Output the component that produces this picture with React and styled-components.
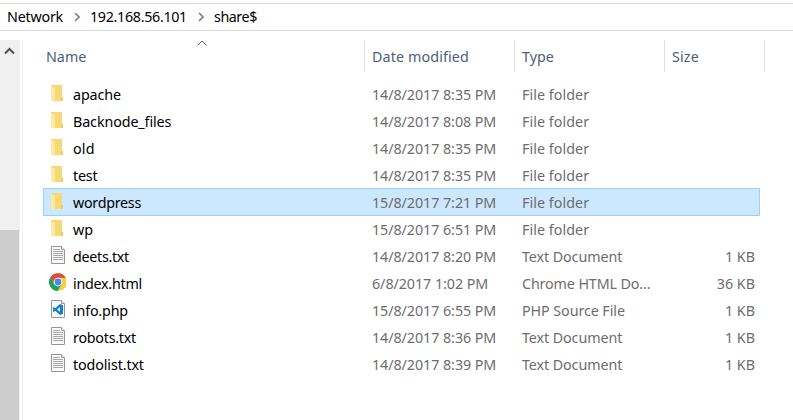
import React from "react";
import styled, { createGlobalStyle } from "styled-components";

const GlobalStyle = createGlobalStyle`
  * { box-sizing: border-box; }
  body { margin: 0; background: #fff; overflow: hidden; }
`;

const Window = styled.div`
  display: flex;
  flex-direction: column;
  width: 793px;
  height: 420px;
  padding-top: 3px;
  background: #fff;
  color: #000;
  font: 14.3px/27px "Noto Sans", "Open Sans", sans-serif;
  white-space: nowrap;
  overflow: hidden;
`;

const AddressBar = styled.nav`
  display: flex;
  align-items: flex-start;
  height: 28px;
  flex: none;
  border-top: 1px solid #d9d9d9;
  border-bottom: 1px solid #d9d9d9;
  padding-left: 7px;
  line-height: 25px;
`;

const Crumb = styled.span`
  width: ${(p) => p.$width}px;
  letter-spacing: ${(p) => p.$spacing}px;
`;

const CrumbArrow = styled.svg`
  width: 6px;
  height: 10px;
  margin: 8px 10px 0 10px;
  flex: none;
`;

const Body = styled.div`
  display: flex;
  flex: 1;
  min-height: 0;
  margin-top: 9px;
`;

const ScrollBar = styled.div`
  display: flex;
  flex-direction: column;
  width: 20px;
  background: #f0f0f0;
`;

const ScrollUp = styled.div`
  height: 190px;
  padding: 7px 0 0 4px;
  line-height: 0;
`;

const Thumb = styled.div`
  flex: 1;
  width: 19px;
  background: #cdcdcd;
`;

const Pane = styled.main`
  flex: 1;
  margin-left: 2px;
  border-left: 1px solid #f4f4f4;
`;

const Header = styled.div`
  display: grid;
  grid-template-columns: 341px 150px 150px 100px;
  height: 32px;
  margin-bottom: 9px;
  margin-left: 1px;
  color: #4c607a;
`;

const HeaderCell = styled.div`
  position: relative;
  border-right: 1px solid #e2e2e2;
  padding: 3px 0 0 ${(p) => p.$indent}px;
  letter-spacing: ${(p) => p.$spacing || 0}px;
`;

const SortArrow = styled.svg`
  position: absolute;
  left: 173px;
  top: 0;
  width: 10px;
  height: 6px;
`;

const Row = styled.div`
  display: grid;
  grid-template-columns: 29px 299px 150px 150px 83px;
  align-items: start;
  width: 717px;
  height: ${(p) => (p.$selected ? 28 : 27)}px;
  margin: ${(p) => (p.$selected ? -1 : 0)}px 0 0 20px;
  border: solid ${(p) => (p.$selected ? "#99d1ff" : "transparent")};
  border-width: ${(p) => (p.$selected ? 1 : 0)}px 1px;
  background: ${(p) => (p.$selected ? "#cce8ff" : "transparent")};
`;

const IconBox = styled.div`
  height: 22px;
  padding: 2px 0 0 2px;
  line-height: 0;
  svg { width: 20px; height: 20px; }
`;

const Name = styled.span`
  letter-spacing: ${(p) => p.$spacing}px;
`;

const Detail = styled.span`
  color: #6d6d6d;
  letter-spacing: ${(p) => p.$spacing || 0}px;
`;

const Size = styled(Detail)`
  text-align: right;
`;

function FolderIcon() {
  return (
    <svg viewBox="0 0 20 20">
      <path d="M6 2h10v12h1v4H7z" fill="#f8d775" />
      <path d="M15 14h2v4h-2z" fill="#f0cb66" />
      <path d="M5 2h3v15.5L5 17z" fill="#f5d480" />
      <path d="M5 2.5l4 2.3V19l-4-1.5z" fill="#ffe8a0" />
    </svg>
  );
}

function Sheet({ children }) {
  return (
    <svg viewBox="0 0 20 20">
      <path d="M5.5 1.5h10l3 3v14h-13z" fill="#fafafa" stroke="#969696" />
      <path d="M15.5 1.5v3h3" fill="#fff" stroke="#969696" />
      {children}
    </svg>
  );
}

function TextIcon() {
  return (
    <Sheet>
      <path d="M7 4.5h7M7 6.5h10M7 8.5h10M7 10.5h10M7 12.5h10M7 14.5h10" stroke="#a8a8a8" />
    </Sheet>
  );
}

function CodeIcon() {
  return (
    <Sheet>
      <path d="M14 5l3 1.3v8.4L14 16l-4.7-4.2L7.6 13 7 12.5V8.4l.6-.4 1.7 1.2zM14 8.2l-2.8 2.3L14 12.8z" fill="#1480cb" fillRule="evenodd" />
    </Sheet>
  );
}

function ChromeIcon() {
  return (
    <svg viewBox="0 0 20 20">
      <circle cx="12" cy="10" r="9" fill="#fbce32" />
      <path d="M4.2 5.5A9 9 0 0 0 11.6 19l4.1-7-3.7 1.9-3.9-1.9z" fill="#1da462" />
      <path d="M4.2 5.5A9 9 0 0 1 19.8 5.8H12a4.2 4.2 0 0 0-4 5.4z" fill="#dc4b3e" />
      <circle cx="12" cy="10" r="4.3" fill="#fff" />
      <circle cx="12" cy="10" r="3.4" fill="#4688f1" />
    </svg>
  );
}

const icons = { folder: FolderIcon, text: TextIcon, chrome: ChromeIcon, code: CodeIcon };

const typeSpacing = {
  "File folder": 0.05,
  "Text Document": -0.09,
  "Chrome HTML Do...": -0.13,
  "PHP Source File": -0.08,
};

const files = [
  { name: "apache", spacing: -0.1, icon: "folder", date: "14/8/2017 8:35 PM", type: "File folder" },
  { name: "Backnode_files", spacing: -0.1, icon: "folder", date: "14/8/2017 8:08 PM", type: "File folder" },
  { name: "old", spacing: 0.15, icon: "folder", date: "14/8/2017 8:35 PM", type: "File folder" },
  { name: "test", spacing: -0.2, icon: "folder", date: "14/8/2017 8:35 PM", type: "File folder" },
  { name: "wordpress", spacing: -0.28, icon: "folder", date: "15/8/2017 7:21 PM", type: "File folder", selected: true },
  { name: "wp", spacing: -0.1, icon: "folder", date: "15/8/2017 6:51 PM", type: "File folder" },
  { name: "deets.txt", spacing: -0.3, icon: "text", date: "14/8/2017 8:20 PM", type: "Text Document", size: "1 KB" },
  { name: "index.html", spacing: -0.26, icon: "chrome", date: "6/8/2017 1:02 PM", type: "Chrome HTML Do...", size: "36 KB" },
  { name: "info.php", spacing: -0.18, icon: "code", date: "15/8/2017 6:55 PM", type: "PHP Source File", size: "1 KB" },
  { name: "robots.txt", spacing: -0.24, icon: "text", date: "14/8/2017 8:36 PM", type: "Text Document", size: "1 KB" },
  { name: "todolist.txt", spacing: -0.12, icon: "text", date: "14/8/2017 8:39 PM", type: "Text Document", size: "1 KB" },
];

function Arrow() {
  return (
    <CrumbArrow viewBox="0 0 6 10">
      <path d="M1 1l4 4-4 4" fill="none" stroke="#808080" strokeWidth="1.6" />
    </CrumbArrow>
  );
}

export default function App() {
  return (
    <Window>
      <GlobalStyle />
      <AddressBar>
        <Crumb $width={57} $spacing={-0.22}>Network</Crumb>
        <Arrow />
        <Crumb $width={98} $spacing={-0.32}>192.168.56.101</Crumb>
        <Arrow />
        <Crumb $width={43} $spacing={-0.45}>share$</Crumb>
      </AddressBar>
      <Body>
        <ScrollBar>
          <ScrollUp>
            <svg width="11" height="8" viewBox="0 0 11 8">
              <path d="M1 6.5l4.5-4.5L10 6.5" fill="none" stroke="#505050" strokeWidth="2" />
            </svg>
          </ScrollUp>
          <Thumb />
        </ScrollBar>
        <Pane>
          <Header>
            <HeaderCell $indent={22}>
              Name
              <SortArrow viewBox="0 0 10 6">
                <path d="M.5 5.5L5 1l4.5 4.5" fill="none" stroke="#666" />
              </SortArrow>
            </HeaderCell>
            <HeaderCell $indent={7} $spacing={0.12}>Date modified</HeaderCell>
            <HeaderCell $indent={7}>Type</HeaderCell>
            <HeaderCell $indent={7} $spacing={0.15}>Size</HeaderCell>
          </Header>
          {files.map((f) => {
            const Icon = icons[f.icon];
            return (
              <Row key={f.name} $selected={f.selected}>
                <IconBox><Icon /></IconBox>
                <Name $spacing={f.spacing}>{f.name}</Name>
                <Detail $spacing={-0.06}>{f.date}</Detail>
                <Detail $spacing={typeSpacing[f.type]}>{f.type}</Detail>
                <Size>{f.size}</Size>
              </Row>
            );
          })}
        </Pane>
      </Body>
    </Window>
  );
}
